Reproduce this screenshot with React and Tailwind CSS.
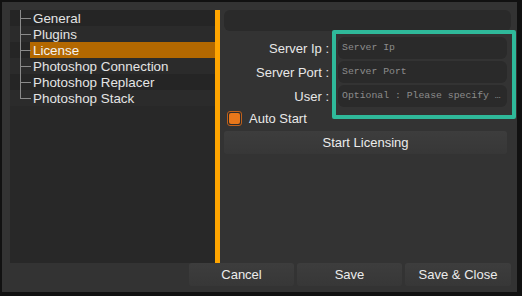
import React, { useState } from "react";

// --- Settings dialog: tree on the left, license form on the right ---

const pages = [
  "General",
  "Plugins",
  "License",
  "Photoshop Connection",
  "Photoshop Replacer",
  "Photoshop Stack",
];

function TreeRow({ label, index, selected, last }) {
  const stripe = index % 2 === 0 ? "bg-[#252525]" : "bg-[#2b2b2b]";
  return (
    <div className={`relative h-4 flex items-center ${stripe}`}>
      {/* tree guide */}
      <span
        className={`absolute left-[10px] top-0 w-px bg-[#8a8a8a] ${last ? "h-[9px]" : "h-4"}`}
      />
      <span className="absolute left-[10px] top-[8px] w-[11px] h-px bg-[#8a8a8a]" />
      <div
        className={`ml-[20px] flex-1 h-4 pl-[3px] leading-[17px] text-[13.4px] ${
          selected ? "bg-[#b36800] text-[#f2f2f2]" : "text-[#e4e4e4]"
        }`}
      >
        {label}
      </div>
    </div>
  );
}

function Field({ label, placeholder }) {
  return (
    <div className="flex items-center h-[22px] mb-[2px]">
      <div className="w-[106px] text-right text-[#e8e8e8] pr-[1px] leading-[23px]">{label}</div>
      <div className="ml-[8px] w-[169px] h-[22px] rounded-[6px] bg-[#2a2a2a] flex items-center pl-[4px] overflow-hidden">
        <span className="font-['Liberation_Mono',monospace] text-[9.8px] text-[#8c8c8c] whitespace-nowrap">
          {placeholder}
        </span>
      </div>
    </div>
  );
}

function Button({ children, className = "" }) {
  return (
    <button
      className={`h-[23px] rounded-[3px] bg-gradient-to-b from-[#3d3d3d] to-[#373737] text-[#ececec] text-[13px] leading-[24px] ${className}`}
    >
      {children}
    </button>
  );
}

export default function App() {
  const [selected] = useState(2);

  return (
    <div className="w-[522px] h-[296px] bg-[#111111] pt-[2px] pl-[2px] pr-[5px] pb-[4px] font-['Liberation_Sans',Arial,sans-serif] text-[13px]">
      <div className="w-full h-full bg-[#333333] flex flex-col pt-[8px]">
        <div className="flex h-[253px]">
          {/* Left tree panel */}
          <div className="ml-[8px] w-[205px] bg-[#282828] flex flex-col">
            {pages.map((p, i) => (
              <TreeRow
                key={p}
                label={p}
                index={i}
                selected={i === selected}
                last={i === pages.length - 1}
              />
            ))}
          </div>

          {/* Splitter */}
          <div className="w-[5px] bg-[#ffa500]" />

          {/* Right panel */}
          <div className="relative flex-1 pl-[4px] pr-[6px]">
            <div className="h-[21px] rounded-[6px] bg-[#2a2a2a]" />
            <div className="mt-[6px] w-[283px]">
              <Field label="Server Ip :" placeholder="Server Ip" />
              <Field label="Server Port :" placeholder="Server Port" />
              <Field label="User :" placeholder="Optional : Please specify …" />
            </div>

            <div className="flex items-center h-[19px] mt-[1px]">
              <span className="ml-[3px] w-[15px] h-[15px] rounded-[3px] border border-[#c0601a] bg-[#2c2c2c] flex items-center justify-center">
                <span className="w-[11px] h-[11px] rounded-[2px] bg-[#e8771a]" />
              </span>
              <span className="ml-[7px] text-[#e8e8e8] leading-[20px]">Auto Start</span>
            </div>

            <Button className="mt-[3px] w-[283px] block">Start Licensing</Button>

            {/* annotation highlight */}
            <div className="absolute left-[112px] top-[20px] w-[184px] h-[89px] border-[4px] border-[#2fb99a] rounded-[2px]" />
          </div>
        </div>

        {/* Bottom buttons */}
        <div className="flex justify-end gap-[3px] pr-[6px]">
          <Button className="w-[105px]">Cancel</Button>
          <Button className="w-[105px]">Save</Button>
          <Button className="w-[106px]">Save &amp; Close</Button>
        </div>
      </div>
    </div>
  );
}
